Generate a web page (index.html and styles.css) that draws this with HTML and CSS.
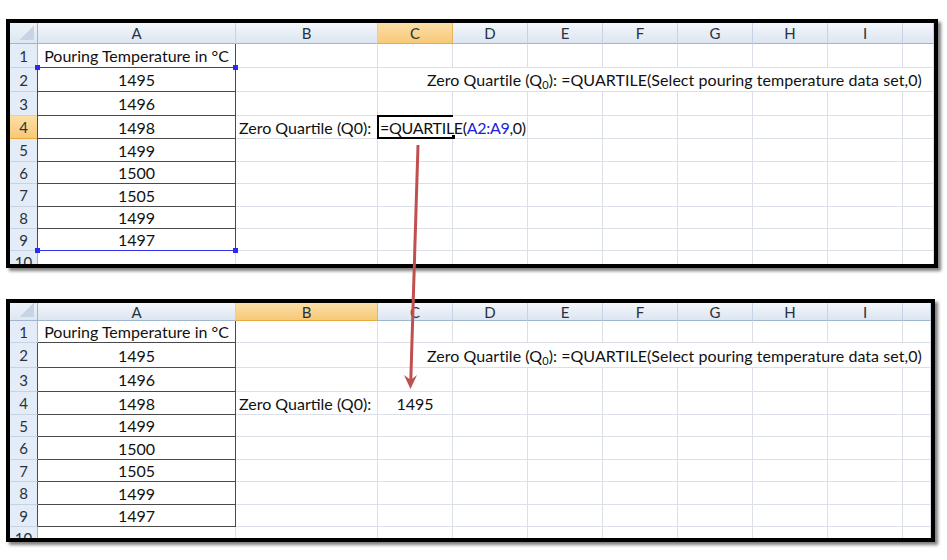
FILE: index.html
```html
<!DOCTYPE html>
<html>
<head>
<meta charset="utf-8">
<link rel="stylesheet" href="styles.css">
</head>
<body>
<div class="page">
  <div class="panel p1">
    <div class="sheet">
      <div class="layer cells">
        <div class="corner"></div><div class="hd">A</div><div class="hd">B</div><div class="hd sel">C</div><div class="hd">D</div><div class="hd">E</div><div class="hd">F</div><div class="hd">G</div><div class="hd">H</div><div class="hd">I</div><div class="hd"></div>

        <div class="rh">1</div><div class="c a ab">Pouring Temperature in °C</div><div class="c"></div><div class="c"></div><div class="c"></div><div class="c"></div><div class="c"></div><div class="c"></div><div class="c"></div><div class="c"></div><div class="c"></div>

        <div class="rh dk">2</div><div class="c a ab">1495</div><div class="c"></div><div class="c wide"><span>Zero Quartile (Q<sub>0</sub>): =QUARTILE(Select pouring temperature data set,0)</span></div>

        <div class="rh dk">3</div><div class="c a ab">1496</div><div class="c"></div><div class="c"></div><div class="c"></div><div class="c"></div><div class="c"></div><div class="c"></div><div class="c"></div><div class="c"></div><div class="c"></div>

        <div class="rh dk sel">4</div><div class="c a ab">1498</div><div class="c">Zero Quartile (Q0):</div><div class="c edit">=QUARTILE(<span class="ref">A2:A9</span>,0)<span class="caret"></span></div><div class="c"></div><div class="c"></div><div class="c"></div><div class="c"></div><div class="c"></div><div class="c"></div>

        <div class="rh dk">5</div><div class="c a ab">1499</div><div class="c"></div><div class="c"></div><div class="c"></div><div class="c"></div><div class="c"></div><div class="c"></div><div class="c"></div><div class="c"></div><div class="c"></div>

        <div class="rh dk">6</div><div class="c a ab">1500</div><div class="c"></div><div class="c"></div><div class="c"></div><div class="c"></div><div class="c"></div><div class="c"></div><div class="c"></div><div class="c"></div><div class="c"></div>

        <div class="rh dk">7</div><div class="c a ab">1505</div><div class="c"></div><div class="c"></div><div class="c"></div><div class="c"></div><div class="c"></div><div class="c"></div><div class="c"></div><div class="c"></div><div class="c"></div>

        <div class="rh dk">8</div><div class="c a ab">1499</div><div class="c"></div><div class="c"></div><div class="c"></div><div class="c"></div><div class="c"></div><div class="c"></div><div class="c"></div><div class="c"></div><div class="c"></div>

        <div class="rh dk">9</div><div class="c a ab">1497</div><div class="c"></div><div class="c"></div><div class="c"></div><div class="c"></div><div class="c"></div><div class="c"></div><div class="c"></div><div class="c"></div><div class="c"></div>

        <div class="rh cut">10</div><div class="c"></div><div class="c"></div><div class="c"></div><div class="c"></div><div class="c"></div><div class="c"></div><div class="c"></div><div class="c"></div><div class="c"></div><div class="c"></div>
      </div>
      <div class="layer over">
        <div class="refbox"><span class="h h1"></span><span class="h h2"></span><span class="h h3"></span><span class="h h4"></span></div>
        <div class="editbox"></div>
      </div>
    </div>
  </div>

  <div class="panel p2">
    <div class="sheet">
      <div class="layer cells">
        <div class="corner"></div><div class="hd">A</div><div class="hd sel">B</div><div class="hd">C</div><div class="hd">D</div><div class="hd">E</div><div class="hd">F</div><div class="hd">G</div><div class="hd">H</div><div class="hd">I</div><div class="hd"></div>

        <div class="rh">1</div><div class="c a ab">Pouring Temperature in °C</div><div class="c"></div><div class="c"></div><div class="c"></div><div class="c"></div><div class="c"></div><div class="c"></div><div class="c"></div><div class="c"></div><div class="c"></div>

        <div class="rh dk">2</div><div class="c a ab">1495</div><div class="c"></div><div class="c wide"><span>Zero Quartile (Q<sub>0</sub>): =QUARTILE(Select pouring temperature data set,0)</span></div>

        <div class="rh dk">3</div><div class="c a ab">1496</div><div class="c"></div><div class="c"></div><div class="c"></div><div class="c"></div><div class="c"></div><div class="c"></div><div class="c"></div><div class="c"></div><div class="c"></div>

        <div class="rh dk">4</div><div class="c a ab">1498</div><div class="c">Zero Quartile (Q0):</div><div class="c a">1495</div><div class="c"></div><div class="c"></div><div class="c"></div><div class="c"></div><div class="c"></div><div class="c"></div><div class="c"></div>

        <div class="rh dk">5</div><div class="c a ab">1499</div><div class="c"></div><div class="c"></div><div class="c"></div><div class="c"></div><div class="c"></div><div class="c"></div><div class="c"></div><div class="c"></div><div class="c"></div>

        <div class="rh dk">6</div><div class="c a ab">1500</div><div class="c"></div><div class="c"></div><div class="c"></div><div class="c"></div><div class="c"></div><div class="c"></div><div class="c"></div><div class="c"></div><div class="c"></div>

        <div class="rh dk">7</div><div class="c a ab">1505</div><div class="c"></div><div class="c"></div><div class="c"></div><div class="c"></div><div class="c"></div><div class="c"></div><div class="c"></div><div class="c"></div><div class="c"></div>

        <div class="rh dk">8</div><div class="c a ab">1499</div><div class="c"></div><div class="c"></div><div class="c"></div><div class="c"></div><div class="c"></div><div class="c"></div><div class="c"></div><div class="c"></div><div class="c"></div>

        <div class="rh dk">9</div><div class="c a ab">1497</div><div class="c"></div><div class="c"></div><div class="c"></div><div class="c"></div><div class="c"></div><div class="c"></div><div class="c"></div><div class="c"></div><div class="c"></div>

        <div class="rh cut">10</div><div class="c"></div><div class="c"></div><div class="c"></div><div class="c"></div><div class="c"></div><div class="c"></div><div class="c"></div><div class="c"></div><div class="c"></div><div class="c"></div>
      </div>
    </div>
  </div>

  <svg class="arrow" width="947" height="560" viewBox="0 0 947 560">
    <line x1="418" y1="145" x2="410.8" y2="380" stroke="#c0504d" stroke-width="3"/>
    <polygon points="404,375 410.7,380 417,375 410.5,389" fill="#c0504d"/>
  </svg>
</div>
</body>
</html>
```

FILE: styles.css
```css
* { box-sizing: border-box; }

body {
  margin: 0;
  background: #fff;
  font-family: Lato, "Liberation Sans", sans-serif;
}

.page {
  position: relative;
  width: 947px;
  height: 560px;
  padding: 19px 0 0 6px;
}

.panel {
  border: 4px solid #000;
  box-shadow: 3px 3px 3px rgba(0, 0, 0, 0.5);
  background: #fff;
  overflow: hidden;
}

.p1 { width: 932px; height: 249px; }
.p2 { width: 929px; height: 243px; margin-top: 31px; }

.sheet {
  display: grid;
  height: 100%;
}

.layer {
  grid-area: 1 / 1;
  display: grid;
  grid-template-columns: 28px 198px 142px repeat(7, 75px) 1fr;
}

.p1 .layer { grid-template-rows: 21px 24px 24px 24px 23px 23px 22px 23px 22px 22px 1fr; }
.p2 .layer { grid-template-rows: 18px 22px 25px 24px 23px 22px 23px 22px 23px 22px 1fr; }

.over { pointer-events: none; }

.corner {
  background:
    linear-gradient(to bottom right, transparent 50%, #c8d4e5 50%) no-repeat right 3px bottom 3px / 15px 14px,
    linear-gradient(#eef3f9, #dde6f2);
  border-right: 1px solid #9eb6ce;
  border-bottom: 1px solid #9eb6ce;
}

.hd {
  background: linear-gradient(#f4f7fb, #dce5f1);
  border-right: 1px solid #c5d3e4;
  border-bottom: 1px solid #9eb6ce;
  display: flex;
  align-items: center;
  justify-content: center;
  font-size: 15px;
  color: #27323f;
}

.rh {
  background: #e4ecf7;
  border-right: 1px solid #9eb6ce;
  border-bottom: 1px solid #c5d3e4;
  display: flex;
  align-items: center;
  justify-content: center;
  font-size: 15px;
  color: #27323f;
}

.rh.dk { border-right-color: #4a4a4a; }

.rh.cut {
  align-items: flex-start;
  line-height: 22px;
  border-bottom: 0;
}

.hd.sel, .rh.sel {
  background: linear-gradient(#fbdfa6, #f7c978);
  border-right-color: #e9b35c;
  border-bottom-color: #e9a93e;
}

.c {
  border-right: 1px solid #dadfe8;
  border-bottom: 1px solid #dadfe8;
  display: flex;
  align-items: center;
  white-space: nowrap;
  font-size: 16px;
  color: #111;
  padding: 0 3px;
}

.c.a { justify-content: center; border-right-color: #4a4a4a; }
.c.ab { border-bottom-color: #4a4a4a; }
.p2 .c.a:not(.ab) { border-right-color: #dadfe8; }

.c.wide {
  grid-column: span 8;
  padding-left: 49px;
  letter-spacing: 0.05px;
}

.c sub {
  font-size: 11px;
  position: relative;
  top: 3px;
  vertical-align: baseline;
  line-height: 0;
}

.c.edit {
  grid-column: span 2;
  padding-left: 2px;
  letter-spacing: -0.3px;
}

.ref { color: #2020e0; }

.caret {
  display: inline-block;
  width: 1px;
  height: 19px;
  background: #000;
  margin-left: 1px;
}

.refbox {
  grid-column: 2;
  grid-row: 3 / 11;
  margin: -1px 0 0 -1px;
  border: 1px solid #3434f0;
  position: relative;
}

.h {
  position: absolute;
  width: 5px;
  height: 5px;
  background: #2a2af0;
}
.h1 { left: -3px; top: -3px; }
.h2 { right: -3px; top: -3px; }
.h3 { left: -3px; bottom: -3px; }
.h4 { right: -3px; bottom: -3px; }

.editbox {
  grid-column: 4;
  grid-row: 5;
  margin: -1px 0 0 -1px;
  border: 2px solid #000;
  border-right: 0;
  position: relative;
}

.editbox::after {
  content: "";
  position: absolute;
  right: -2px;
  bottom: -2px;
  width: 3px;
  height: 4px;
  background: #000;
}

.arrow {
  position: absolute;
  left: 0;
  top: 0;
  pointer-events: none;
}
```
